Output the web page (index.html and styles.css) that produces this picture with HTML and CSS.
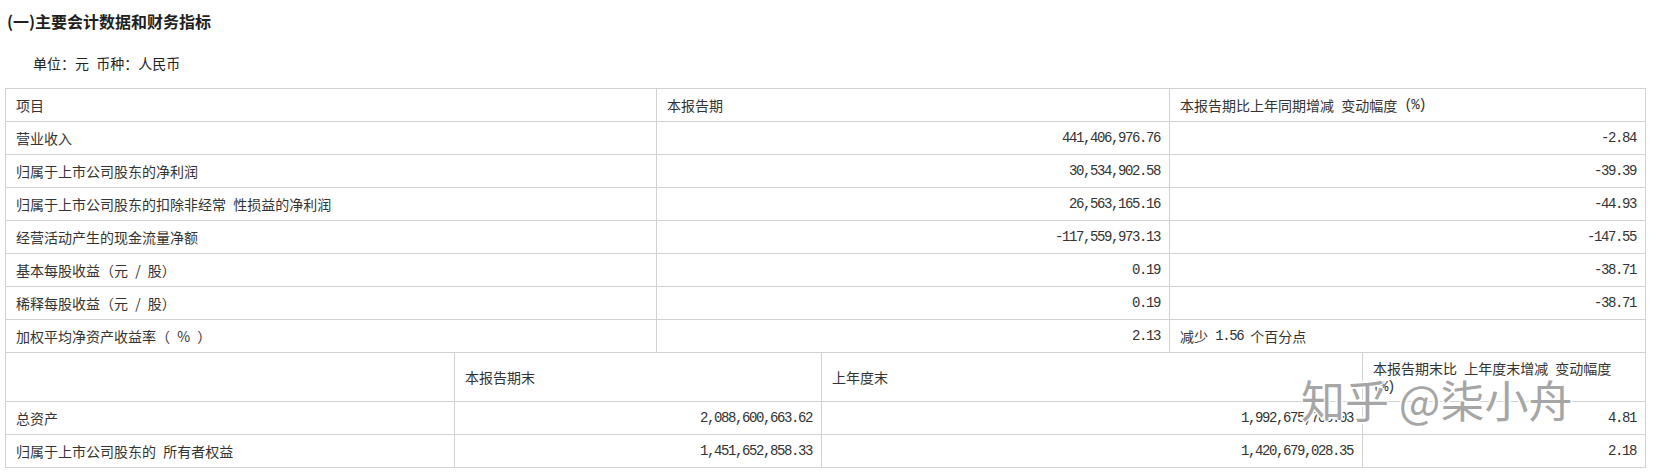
FILE: index.html
```html
<!DOCTYPE html>
<html lang="zh-CN">
<head>
<meta charset="utf-8">
<title>主要会计数据和财务指标</title>
<link rel="stylesheet" href="styles.css">
</head>
<body>
<div class="page">
  <h3 class="title">(一)主要会计数据和财务指标</h3>
  <p class="unit">单位：元 币种：人民币</p>

  <div class="grid g1">
    <div class="c">项目</div>
    <div class="c">本报告期</div>
    <div class="c">本报告期比上年同期增减 变动幅度 <span class="half">(%)</span></div>

    <div class="c">营业收入</div>
    <div class="c num">441,406,976.76</div>
    <div class="c num">-2.84</div>

    <div class="c">归属于上市公司股东的净利润</div>
    <div class="c num">30,534,902.58</div>
    <div class="c num">-39.39</div>

    <div class="c">归属于上市公司股东的扣除非经常 性损益的净利润</div>
    <div class="c num">26,563,165.16</div>
    <div class="c num">-44.93</div>

    <div class="c">经营活动产生的现金流量净额</div>
    <div class="c num">-117,559,973.13</div>
    <div class="c num">-147.55</div>

    <div class="c">基本每股收益（元 / 股）</div>
    <div class="c num">0.19</div>
    <div class="c num">-38.71</div>

    <div class="c">稀释每股收益（元 / 股）</div>
    <div class="c num">0.19</div>
    <div class="c num">-38.71</div>

    <div class="c">加权平均净资产收益率（ % ）</div>
    <div class="c num">2.13</div>
    <div class="c">减少 <span class="half">1.56</span> 个百分点</div>
  </div>

  <div class="grid g2">
    <div class="c"></div>
    <div class="c">本报告期末</div>
    <div class="c">上年度末</div>
    <div class="c wrap">本报告期末比 上年度末增减 变动幅度<br><span class="half">(%)</span></div>

    <div class="c">总资产</div>
    <div class="c num">2,088,600,663.62</div>
    <div class="c num">1,992,675,706.03</div>
    <div class="c num">4.81</div>

    <div class="c">归属于上市公司股东的 所有者权益</div>
    <div class="c num">1,451,652,858.33</div>
    <div class="c num">1,420,679,028.35</div>
    <div class="c num">2.18</div>
  </div>

  <div class="watermark">知乎 @柒小舟</div>
</div>
</body>
</html>
```

FILE: styles.css
```css
html, body {
  margin: 0;
  padding: 0;
  background: #ffffff;
}

body {
  font-family: "Noto Sans CJK SC", "Noto Sans", sans-serif;
  color: #333333;
}

.page {
  position: relative;
  width: 1655px;
  height: 476px;
  overflow: hidden;
}

.title {
  margin: 0;
  padding: 9px 0 0 7px;
  height: 24px;
  line-height: 24px;
  font-size: 16px;
  font-weight: bold;
  color: #231f20;
}

.unit {
  margin: 20px 0 0 0;
  padding-left: 33px;
  height: 20px;
  line-height: 20px;
  font-size: 14px;
  color: #222222;
  word-spacing: 4px;
}

.grid {
  display: grid;
  width: max-content;
  margin-left: 5px;
  border-left: 1px solid #d2d2d2;
}

.g1 {
  margin-top: 15px;
  border-top: 1px solid #d2d2d2;
  grid-template-columns: 651px 513px 476px;
  grid-auto-rows: 33px;
}

.g2 {
  grid-template-columns: 449px 367px 541px 283px;
  grid-template-rows: 49px 33px 33px;
}

.c {
  box-sizing: border-box;
  border-right: 1px solid #d2d2d2;
  border-bottom: 1px solid #d2d2d2;
  padding: 0 10px;
  display: flex;
  align-items: center;
  font-size: 14px;
  white-space: pre;
  word-spacing: 4px;
  overflow: hidden;
}

.num {
  justify-content: flex-end;
  font-family: "Liberation Mono", "DejaVu Sans Mono", monospace;
  letter-spacing: -1.4px;
  word-spacing: 0;
  padding-right: 9px;
}

.half {
  font-family: "Liberation Mono", "DejaVu Sans Mono", monospace;
  letter-spacing: -1.4px;
  word-spacing: 0;
}

.wrap {
  display: block;
  white-space: normal;
  line-height: 17px;
  padding-top: 7px;
}

.watermark {
  position: absolute;
  left: 1301px;
  top: 373px;
  font-family: "Noto Sans CJK SC", sans-serif;
  font-size: 44px;
  line-height: 52px;
  font-weight: 400;
  color: #a6a6a6;
  white-space: nowrap;
  text-shadow:
    1px 0 0 #ffffff,
    -1px 0 0 #ffffff,
    0 1px 0 #ffffff,
    0 -1px 0 #ffffff,
    2px 0 1px rgba(255,255,255,0.9),
    -2px 0 1px rgba(255,255,255,0.9),
    0 2px 1px rgba(255,255,255,0.9),
    0 -2px 1px rgba(255,255,255,0.9);
  pointer-events: none;
}
```
